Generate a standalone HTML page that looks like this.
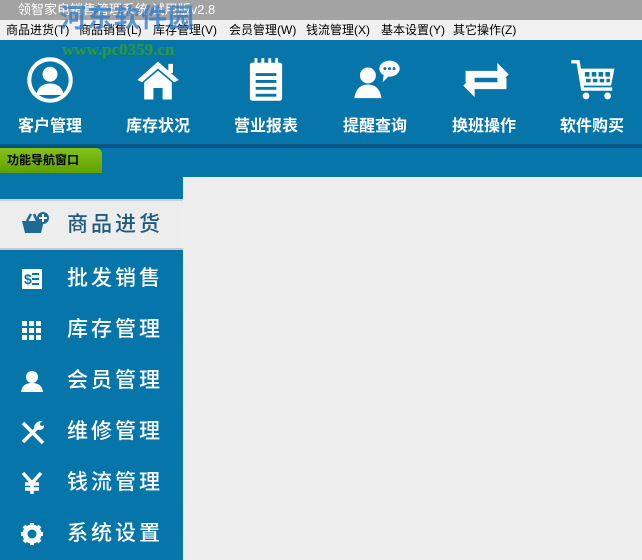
<!DOCTYPE html>
<html><head><meta charset="utf-8"><style>
*{margin:0;padding:0;box-sizing:border-box}
body{width:642px;height:560px;overflow:hidden;background:#eeeeee;font-family:"Liberation Sans","Noto Sans CJK SC",sans-serif;position:relative}
.title{position:absolute;left:0;top:0;width:642px;height:20px;background:#a3a3a3;color:#fff;font-size:13px;line-height:20px;padding-left:18px}
.menu{position:absolute;left:0;top:20px;width:642px;height:20px;background:#f0f0f0;font-size:12px;line-height:21px;color:#000}
.menu span{position:absolute;top:0}
.tool{position:absolute;left:0;top:40px;width:642px;height:106px;background:#0675a9}
.tool .b{position:absolute;top:0;width:108px;text-align:center;color:#fff;font-size:16px;font-weight:bold}
.tool .b svg{position:absolute;left:31px;top:17px}
.tool .b div{position:absolute;top:72px;width:108px;text-align:center}
.sep{position:absolute;left:0;top:144px;width:642px;height:4px;background:linear-gradient(#0a5c86,#04507a)}
.tabrow{position:absolute;left:0;top:148px;width:642px;height:29px;background:#0675a9}
.tab{position:absolute;left:0;top:148px;width:102px;height:25px;background:linear-gradient(#86c21a,#5fa000);border-radius:0 6px 0 0;font-size:12px;font-weight:bold;line-height:25px;padding-left:7px}
.side{position:absolute;left:0;top:177px;width:183px;height:383px;background:#0675a9}
.item{position:absolute;left:0;width:183px;height:51px;color:#fff;font-size:21px;font-weight:500;line-height:51px;letter-spacing:3px}
.item .t{position:absolute;left:67px}
.item svg{position:absolute;left:20px;top:14px}
.sel{background:#ededed;color:#1d5a80;border-top:2px solid #d0d0d0;border-bottom:2px solid #c8c8c8}
.wm1{position:absolute;left:60px;top:-2px;font-size:26px;font-weight:bold;color:rgba(40,120,200,.75);letter-spacing:1px}
.wm2{position:absolute;left:62px;top:40px;font-size:17px;font-weight:bold;color:#2e9a3a;font-family:"Liberation Serif",serif}
</style></head><body>
<div class="title">领智家电销售管理系统 试用版v2.8</div>
<div class="menu">
<span style="left:6px">商品进货(T)</span><span style="left:79px">商品销售(L)</span><span style="left:153px">库存管理(V)</span><span style="left:229px">会员管理(W)</span><span style="left:306px">钱流管理(X)</span><span style="left:381px">基本设置(Y)</span><span style="left:453px">其它操作(Z)</span>
</div>
<div class="tool">
<div class="b" style="left:-4px"><svg width="46" height="46" viewBox="0 0 40 40"><circle cx="20" cy="20" r="18" fill="none" stroke="#fff" stroke-width="3.5"/><circle cx="20" cy="15" r="6.5" fill="#fff"/><path d="M8 33 Q10 23 20 23 Q30 23 32 33 Z" fill="#fff"/></svg><div>客户管理</div></div>
<div class="b" style="left:104px"><svg width="46" height="46" viewBox="0 0 40 40"><path d="M2 20 L20 4 L38 20 L34 22 L20 10 L6 22Z" fill="#fff"/><rect x="29" y="6" width="4" height="8" fill="#fff"/><path d="M8 22 L20 12 L32 22 L32 37 L24 37 L24 27 L16 27 L16 37 L8 37Z" fill="#fff"/></svg><div>库存状况</div></div>
<div class="b" style="left:212px"><svg width="46" height="46" viewBox="0 0 40 40"><rect x="6" y="5" width="28" height="33" rx="2" fill="#fff"/><g fill="#0675a9"><rect x="11" y="14" width="18" height="2.5"/><rect x="11" y="20" width="18" height="2.5"/><rect x="11" y="26" width="18" height="2.5"/><rect x="11" y="32" width="18" height="2.5"/></g><g fill="#fff"><rect x="10" y="1" width="2.5" height="7"/><rect x="16" y="1" width="2.5" height="7"/><rect x="22" y="1" width="2.5" height="7"/><rect x="28" y="1" width="2.5" height="7"/></g></svg><div>营业报表</div></div>
<div class="b" style="left:321px"><svg width="50" height="46" viewBox="0 0 44 40"><circle cx="14" cy="16" r="7" fill="#fff"/><path d="M2 36 Q4 24 14 24 Q24 24 26 36Z" fill="#fff"/><ellipse cx="33" cy="10" rx="9" ry="7" fill="#fff"/><path d="M28 15 L27 22 L33 16Z" fill="#fff"/><g fill="#0675a9"><circle cx="29" cy="10" r="1.3"/><circle cx="33" cy="10" r="1.3"/><circle cx="37" cy="10" r="1.3"/></g></svg><div>提醒查询</div></div>
<div class="b" style="left:430px"><svg width="50" height="46" viewBox="0 0 44 40"><path d="M4 22 L4 12 L32 12 L32 5 L42 15 L32 25 L32 18 L10 18 L10 22Z" fill="#fff"/><path d="M40 18 L40 28 L12 28 L12 35 L2 25 L12 15 L12 22 L34 22 L34 18Z" fill="#fff"/></svg><div>换班操作</div></div>
<div class="b" style="left:538px"><svg width="50" height="46" viewBox="0 0 44 40"><path d="M2 4 L8 4 L12 28 L38 28" fill="none" stroke="#fff" stroke-width="3"/><path d="M10 10 L40 10 L37 25 L13 25Z" fill="#fff"/><g fill="#0675a9"><rect x="14" y="13" width="4" height="4"/><rect x="20" y="13" width="4" height="4"/><rect x="26" y="13" width="4" height="4"/><rect x="32" y="13" width="4" height="4"/><rect x="15" y="19" width="4" height="3"/><rect x="21" y="19" width="4" height="3"/><rect x="27" y="19" width="4" height="3"/><rect x="33" y="19" width="3" height="3"/></g><circle cx="15" cy="34" r="3" fill="#fff"/><circle cx="34" cy="34" r="3" fill="#fff"/></svg><div>软件购买</div></div>
</div>
<div class="sep"></div>
<div class="tabrow"></div>
<div class="tab">功能导航窗口</div>
<div class="side">
<div class="item sel" style="top:22px;line-height:47px"><svg width="30" height="24" viewBox="0 0 30 24" style="top:10px"><path d="M2 10 L24 10 L21 22 L5 22Z" fill="#1d6a95"/><path d="M7 10 L11 3 M17 10 L14 3" stroke="#1d6a95" stroke-width="2.5"/><circle cx="23" cy="7" r="6" fill="#1d6a95"/><path d="M23 3v8M19 7h8" stroke="#fff" stroke-width="2"/></svg><span class="t">商品进货</span></div>
<div class="item" style="top:76px"><svg width="24" height="24" viewBox="0 0 24 24"><rect x="2" y="2" width="20" height="20" fill="#fff"/><text x="4" y="17" font-size="14" font-weight="bold" fill="#0675a9" font-family="Liberation Sans">$</text><g fill="#0675a9"><rect x="12" y="6" width="7" height="2"/><rect x="12" y="11" width="7" height="2"/><rect x="12" y="16" width="7" height="2"/></g></svg><span class="t">批发销售</span></div>
<div class="item" style="top:127px"><svg width="24" height="24" viewBox="0 0 24 24" fill="#fff"><rect x="2" y="3" width="5" height="5"/><rect x="9" y="3" width="5" height="5"/><rect x="16" y="3" width="5" height="5"/><rect x="2" y="10" width="5" height="5"/><rect x="9" y="10" width="5" height="5"/><rect x="16" y="10" width="5" height="5"/><rect x="2" y="17" width="5" height="5"/><rect x="9" y="17" width="5" height="5"/><rect x="16" y="17" width="5" height="5"/></svg><span class="t">库存管理</span></div>
<div class="item" style="top:178px"><svg width="24" height="24" viewBox="0 0 24 24" fill="#fff"><circle cx="12" cy="8" r="6"/><path d="M1 23 Q2 14 12 14 Q22 14 23 23Z"/></svg><span class="t">会员管理</span></div>
<div class="item" style="top:229px"><svg width="26" height="26" viewBox="0 0 26 26"><path d="M3 3 L23 23" stroke="#fff" stroke-width="3.5"/><path d="M22 3 A5 5 0 0 0 16 9 L3 22" stroke="#fff" stroke-width="3.5" fill="none"/><circle cx="20" cy="6" r="4" fill="#fff"/><circle cx="22" cy="4" r="2" fill="#0675a9"/></svg><span class="t">维修管理</span></div>
<div class="item" style="top:280px"><svg width="24" height="24" viewBox="0 0 24 24"><path d="M3 2 L12 12 L21 2 M12 12 V23 M5 13 H19 M5 18 H19" stroke="#fff" stroke-width="3.5" fill="none"/></svg><span class="t">钱流管理</span></div>
<div class="item" style="top:331px"><svg width="24" height="24" viewBox="0 0 24 24"><circle cx="12" cy="12" r="7" fill="none" stroke="#fff" stroke-width="5"/><g stroke="#fff" stroke-width="4"><path d="M12 1v5M12 18v5M1 12h5M18 12h5M4 4l3.5 3.5M16.5 16.5L20 20M4 20l3.5-3.5M16.5 7.5L20 4"/></g></svg><span class="t">系统设置</span></div>
</div>
<div class="wm1">河东软件园</div>
<div class="wm2">www.pc0359.cn</div>
</body></html>
